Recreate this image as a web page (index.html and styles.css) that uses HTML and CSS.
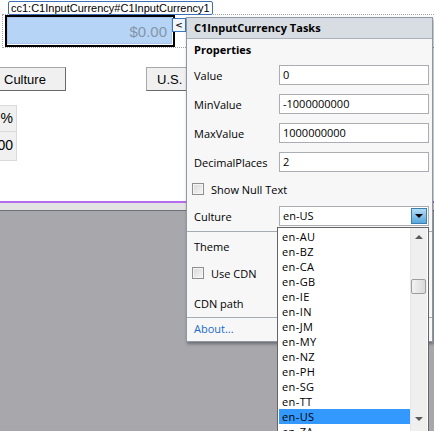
FILE: index.html
```html
<!DOCTYPE html>
<html lang="en">
<head>
    <meta charset="UTF-8">
    <title>C1InputCurrency Designer</title>
    <link rel="stylesheet" href="styles.css">
</head>
<body>
    <div class="surface">
        <div class="tag-row">
            <span class="tag">cc1:C1InputCurrency#C1InputCurrency1</span>
        </div>
        <div class="frame">
            <div class="currency">
                <div class="currency-field">$0.00</div>
            </div>
        </div>
        <div class="button-row">
            <button class="btn btn-culture">Culture</button>
            <button class="btn btn-us">U.S.</button>
        </div>
        <div class="cells">
            <div class="cell cell-top">%</div>
            <div class="cell cell-bottom">00</div>
        </div>
    </div>
    <div class="surface-line"></div>
    <div class="surface-band"></div>
    <div class="canvas"></div>

    <button class="smart-tag">&lt;</button>

    <div class="tasks">
        <div class="tasks-header">C1InputCurrency Tasks</div>
        <div class="tasks-title">Properties</div>

        <div class="props">
            <div class="row">
                <span class="row-label">Value</span>
                <div class="field">0</div>
            </div>
            <div class="row">
                <span class="row-label">MinValue</span>
                <div class="field">-1000000000</div>
            </div>
            <div class="row">
                <span class="row-label">MaxValue</span>
                <div class="field">1000000000</div>
            </div>
            <div class="row">
                <span class="row-label">DecimalPlaces</span>
                <div class="field">2</div>
            </div>
        </div>

        <div class="check-row check-null">
            <span class="checkbox"></span>
            Show Null Text
        </div>

        <div class="row row-culture">
            <span class="row-label">Culture</span>
            <div class="field combo">
                en-US
                <span class="combo-btn"><span class="arrow-down"></span></span>
            </div>
        </div>

        <div class="separator sep-culture"></div>

        <div class="row row-theme">
            <span class="row-label">Theme</span>
        </div>

        <div class="check-row check-cdn">
            <span class="checkbox"></span>
            Use CDN
        </div>

        <div class="row row-cdn">
            <span class="row-label">CDN path</span>
        </div>

        <div class="separator sep-about"></div>

        <a class="about" href="#">About...</a>
    </div>

    <div class="dropdown">
        <div class="list">
            <div class="item">en-AU</div>
            <div class="item">en-BZ</div>
            <div class="item">en-CA</div>
            <div class="item">en-GB</div>
            <div class="item">en-IE</div>
            <div class="item">en-IN</div>
            <div class="item">en-JM</div>
            <div class="item">en-MY</div>
            <div class="item">en-NZ</div>
            <div class="item">en-PH</div>
            <div class="item">en-SG</div>
            <div class="item">en-TT</div>
            <div class="item selected">en-US</div>
            <div class="item">en-ZA</div>
        </div>
        <div class="scrollbar">
            <div class="scroll-btn"><span class="tri-up"></span></div>
            <div class="thumb"></div>
            <div class="scroll-btn scroll-btn-down"><span class="tri-down"></span></div>
        </div>
    </div>
</body>
</html>
```

FILE: styles.css
```css
* {
    margin: 0;
    padding: 0;
    box-sizing: border-box;
}

body {
    width: 434px;
    height: 431px;
    overflow: hidden;
    position: relative;
    background: #a8a7ac;
    font-family: "Open Sans", sans-serif;
    font-size: 11px;
    color: #000;
}

/* design surface behind the popup */

.surface {
    height: 201px;
    background: #fff;
    overflow: hidden;
}

.tag-row {
    height: 14px;
    padding-left: 8px;
    position: relative;
    z-index: 1;
}

.tag {
    display: inline-block;
    height: 14px;
    margin-top: 1px;
    padding: 0 2px;
    border: 1px solid #3a6fb5;
    border-radius: 2px;
    background: #fff;
    font-family: "Liberation Sans", Arial, sans-serif;
    font-size: 11px;
    line-height: 12px;
    white-space: nowrap;
}

.frame {
    height: 34px;
    margin-left: 2px;
    padding-left: 2px;
    border: 1px dotted #a4a4a4;
    border-right: none;
}

.currency {
    width: 170px;
    height: 32px;
    border: 2px solid #000;
    padding: 0 1px 1px 0;
    background: #fff;
}

.currency-field {
    height: 100%;
    background: #b6d4f6;
    border: 1px solid #a4c5ee;
    padding-right: 4px;
    text-align: right;
    font-family: "Liberation Sans", Arial, sans-serif;
    font-size: 15px;
    line-height: 28px;
    color: #8594a8;
}

.button-row {
    display: flex;
    gap: 80px;
    margin-top: 19px;
    margin-left: -6px;
}

.btn {
    height: 24px;
    background: #f0f0f0;
    border: 1px solid #a8a8a8;
    border-right-color: #6a6a6a;
    border-bottom-color: #6a6a6a;
    font-family: "Liberation Sans", Arial, sans-serif;
    font-size: 13px;
    text-align: left;
    color: #000;
}

.btn-culture {
    width: 72px;
    padding-left: 9px;
}

.btn-us {
    width: 60px;
    padding-left: 10px;
}

.cells {
    width: 37px;
    margin-top: 14px;
    margin-left: -20px;
}

.cell {
    background: #f0f0f0;
    border: 1px solid #dadada;
    padding-right: 3px;
    text-align: right;
    font-family: "Liberation Sans", Arial, sans-serif;
    font-size: 14px;
}

.cell-top {
    height: 27px;
    line-height: 25px;
}

.cell-bottom {
    height: 29px;
    border-top: none;
    line-height: 26px;
}

.surface-line {
    height: 2px;
    background: #b46cf0;
}

.surface-band {
    height: 8px;
    background: #e3e3e3;
    border-bottom: 1px solid #6c7178;
}

.smart-tag {
    position: absolute;
    left: 172px;
    top: 18px;
    width: 14px;
    height: 14px;
    border: 1px solid #3a78bd;
    background: #f3f5f8;
    font-family: "DejaVu Sans", sans-serif;
    font-size: 9px;
    font-weight: bold;
    line-height: 12px;
    color: #222;
}

/* smart tag task panel */

.tasks {
    position: absolute;
    left: 186px;
    top: 17px;
    width: 247px;
    height: 325px;
    background: #f7f7f8;
    border: 1px solid #8e98a5;
    box-shadow: 1px 2px 3px rgba(0, 0, 0, 0.35);
}

.tasks-header {
    height: 21px;
    padding-left: 7px;
    background: #d8dce3;
    border-bottom: 1px solid #aab1bb;
    font-weight: bold;
    line-height: 20px;
}

.tasks-title {
    height: 22px;
    padding-left: 7px;
    font-weight: bold;
    line-height: 22px;
}

.props {
    display: flex;
    flex-direction: column;
    gap: 9px;
    padding-top: 4px;
}

.row {
    display: flex;
    align-items: center;
    height: 20px;
    padding-left: 7px;
}

.row-label {
    width: 85px;
    flex-shrink: 0;
}

.field {
    position: relative;
    width: 150px;
    height: 20px;
    padding-left: 3px;
    background: #fff;
    border: 1px solid #abadb3;
    line-height: 18px;
}

.check-row {
    display: flex;
    align-items: center;
    gap: 7px;
    height: 18px;
    padding-left: 5px;
}

.checkbox {
    width: 12px;
    height: 12px;
    border: 1px solid #8e8f8f;
    background: linear-gradient(135deg, #d8d8d8, #f6f6f6);
    box-shadow: inset 0 0 0 1px #f4f4f4;
}

.check-null {
    margin-top: 8px;
}

.row-culture {
    margin-top: 8px;
}

.combo-btn {
    position: absolute;
    right: 1px;
    top: 1px;
    width: 16px;
    height: 16px;
    display: flex;
    align-items: center;
    justify-content: center;
    border: 1px solid #3c7fb1;
    background: linear-gradient(#b3dcf5, #5aa7dc);
}

.arrow-down {
    border-left: 4px solid transparent;
    border-right: 4px solid transparent;
    border-top: 4px solid #000;
}

.separator {
    height: 1px;
    background: #a6acb4;
}

.sep-culture {
    margin-top: 5px;
}

.row-theme {
    margin-top: 4px;
}

.check-cdn {
    margin-top: 8px;
}

.row-cdn {
    margin-top: 11px;
}

.sep-about {
    margin-top: 4px;
}

.about {
    display: block;
    height: 21px;
    padding-left: 7px;
    line-height: 21px;
    color: #1a6dc6;
    text-decoration: none;
}

/* open culture drop down */

.dropdown {
    position: absolute;
    left: 277px;
    top: 227px;
    width: 152px;
    height: 206px;
    display: flex;
    padding-right: 1px;
    background: #fff;
    border: 1px solid #646464;
    overflow: hidden;
}

.list {
    width: 132px;
    padding: 1px 0 0 1px;
}

.item {
    height: 15px;
    padding-left: 3px;
    letter-spacing: 0.4px;
    line-height: 15px;
}

.item.selected {
    background: #3399ff;
}

.scrollbar {
    width: 17px;
    display: flex;
    flex-direction: column;
    background: #efefef;
    border-left: 1px solid #e6e6e6;
}

.scroll-btn {
    height: 17px;
    display: flex;
    align-items: center;
    justify-content: center;
}

.scroll-btn-down {
    margin-top: auto;
    margin-bottom: 5px;
}

.tri-up {
    border-left: 4px solid transparent;
    border-right: 4px solid transparent;
    border-bottom: 4px solid #5a5a5a;
}

.tri-down {
    border-left: 4px solid transparent;
    border-right: 4px solid transparent;
    border-top: 4px solid #5a5a5a;
}

.thumb {
    height: 15px;
    margin: 34px 1px 0 0;
    border: 1px solid #9d9d9d;
    border-radius: 2px;
    background: linear-gradient(90deg, #f2f2f2, #dadada);
}
```
